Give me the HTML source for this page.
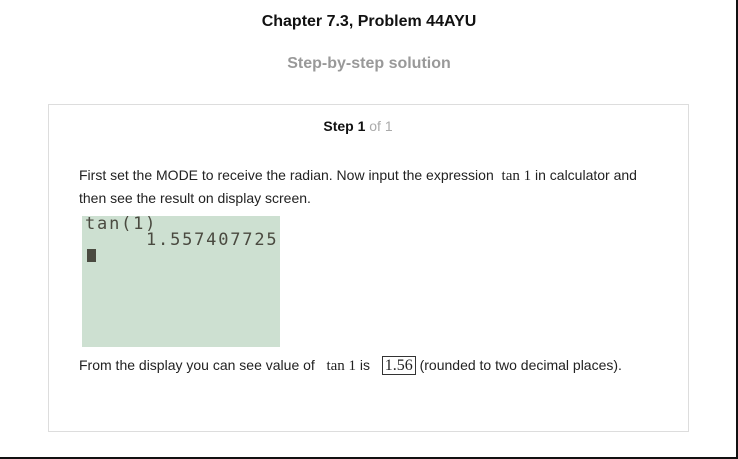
<!DOCTYPE html>
<html><head><meta charset="utf-8"><style>
html,body{margin:0;padding:0;}
body{width:738px;height:459px;position:relative;overflow:hidden;background:#fff;font-family:"Liberation Sans",Arial,sans-serif;}
.frame{position:absolute;left:0;top:0;width:736px;height:457px;border-right:2px solid #111;border-bottom:2px solid #111;}
.t{position:absolute;left:0;width:738px;text-align:center;font-weight:bold;}
.card{position:absolute;left:48px;top:104px;width:639px;height:326px;border:1px solid #ddd;}
.p{position:absolute;left:79px;font-size:14px;color:#222;}
.m{font-family:"Liberation Serif",serif;font-size:15px;}
.calc{position:absolute;left:82px;top:216px;width:198px;height:131px;background:#cde0d1;font-family:"DejaVu Sans Mono","Liberation Mono",monospace;color:#4a4a40;font-size:17px;line-height:16px;letter-spacing:1.8px;}
</style></head><body>
<div class="frame"></div>
<div class="t" style="top:13px;font-size:16px;color:#111;">Chapter 7.3, Problem 44AYU</div>
<div class="t" style="top:55px;font-size:16px;color:#999;">Step-by-step solution</div>
<div class="card"></div>
<div class="t" style="top:118px;font-size:14px;color:#111;left:-11px;">Step 1 <span style="font-weight:normal;color:#aaa">of 1</span></div>
<div class="p" style="top:167px;">First set the MODE to receive the radian. Now input the expression &nbsp;<span class="m">tan 1</span> in calculator and</div>
<div class="p" style="top:190px;">then see the result on display screen.</div>
<div class="calc">
<div style="position:absolute;left:3px;top:0;">tan(1)</div>
<div style="position:absolute;left:64px;top:16px;">1.557407725</div>
<div style="position:absolute;left:5px;top:33px;width:9px;height:13px;background:#4a4a40;"></div>
</div>
<div class="p" style="top:357px;">From the display you can see value of &nbsp;&nbsp;<span class="m">tan 1</span> is &nbsp;&nbsp;<span class="m" style="border:1px solid #333;padding:0 2px;font-size:16px;">1.56</span> (rounded to two decimal places).</div>
</body></html>
